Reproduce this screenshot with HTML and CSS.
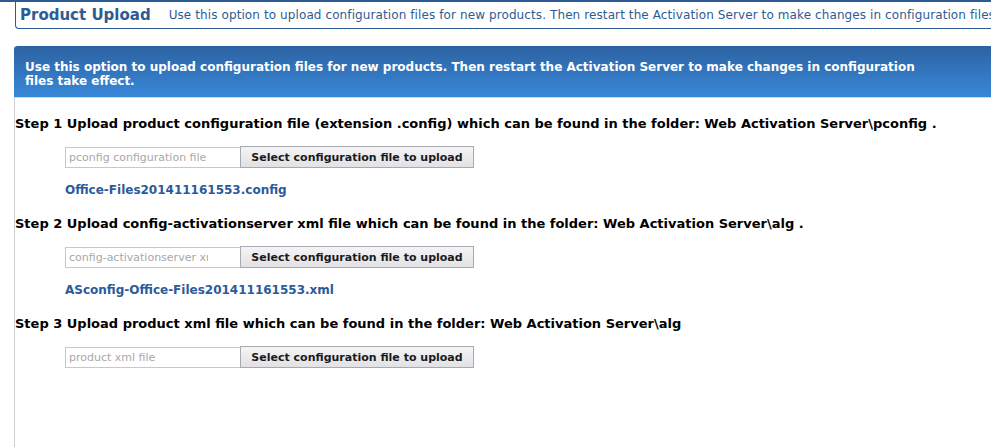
FILE: index.html
```html
<!DOCTYPE html>
<html>
<head>
<meta charset="utf-8">
<link rel="stylesheet" href="styles.css">
</head>
<body>
<div class="topbar"></div>
<div class="page">
  <div class="header">
    <span class="title">Product Upload</span>
    <span class="desc">Use this option to upload configuration files for new products. Then restart the Activation Server to make changes in configuration files take effect.</span>
  </div>
  <div class="content">
    <div class="banner">Use this option to upload configuration files for new products. Then restart the Activation Server to make changes in configuration files take effect.</div>
    <div class="step">
      <div class="step-title">Step 1 Upload product configuration file (extension .config) which can be found in the folder: Web Activation Server\pconfig .</div>
      <div class="upload">
        <input class="file-input" type="text" placeholder="pconfig configuration file">
        <button class="file-btn">Select configuration file to upload</button>
      </div>
      <a class="file-link" href="#">Office-Files201411161553.config</a>
    </div>
    <div class="step">
      <div class="step-title">Step 2 Upload config-activationserver xml file which can be found in the folder: Web Activation Server\alg .</div>
      <div class="upload">
        <input class="file-input" type="text" placeholder="config-activationserver xml file">
        <button class="file-btn">Select configuration file to upload</button>
      </div>
      <a class="file-link" href="#">ASconfig-Office-Files201411161553.xml</a>
    </div>
    <div class="step">
      <div class="step-title">Step 3 Upload product xml file which can be found in the folder: Web Activation Server\alg</div>
      <div class="upload">
        <input class="file-input" type="text" placeholder="product xml file">
        <button class="file-btn">Select configuration file to upload</button>
      </div>
    </div>
  </div>
</div>
</body>
</html>
```

FILE: styles.css
```css
html, body {
  margin: 0;
  padding: 0;
  background: #ffffff;
  overflow: hidden;
}
body {
  font-family: "DejaVu Sans", Verdana, sans-serif;
  width: 991px;
  height: 447px;
}
.topbar {
  height: 2px;
  background: #2d5c94;
}
.page {
  padding-left: 14px;
  width: 977px;
  overflow: hidden;
}
.header {
  margin-left: 1px;
  height: 26px;
  border-left: 1px solid #2d5c94;
  border-bottom: 1px solid #2d5c94;
  border-bottom-left-radius: 4px;
  display: flex;
  align-items: center;
  white-space: nowrap;
  overflow: hidden;
  color: #2d5c94;
  padding-left: 4px;
}
.title {
  font-weight: bold;
  font-size: 15px;
  margin-right: 18px;
  flex-shrink: 0;
}
.desc {
  font-size: 12px;
  letter-spacing: 0.1px;
}
.content {
  margin-top: 17px;
  border-left: 1px solid #cfcfcf;
  height: 420px;
}
.banner {
  width: 977px;
  box-sizing: border-box;
  height: 52px;
  margin-left: -1px;
  border-top-left-radius: 4px;
  background: linear-gradient(#2d62a2, #3888d9);
  border-bottom: 1px solid #d6d6d6;
  color: #ffffff;
  font-weight: bold;
  font-size: 12px;
  line-height: 14px;
  padding: 14px 60px 0 11px;
}
.step {
  padding-top: 18px;
  height: 82px;
}
.step-title {
  font-weight: bold;
  font-size: 13px;
  color: #000;
  white-space: nowrap;
}
.upload {
  display: flex;
  margin: 16px 0 0 50px;
}
.file-input {
  width: 175px;
  height: 21px;
  box-sizing: border-box;
  border: 1px solid #c8c8cc;
  border-right: none;
  padding: 0 32px 0 3px;
  font-family: "DejaVu Sans", Verdana, sans-serif;
  font-size: 11px;
  color: #333;
  outline: none;
}
.file-input::placeholder {
  color: #a8a8a8;
}
.file-btn {
  width: 234px;
  height: 22px;
  margin-top: -1px;
  box-sizing: border-box;
  border: 1px solid #a9a9b0;
  background: linear-gradient(#f4f4f6, #e2e2e6);
  font-family: "DejaVu Sans", Verdana, sans-serif;
  font-weight: bold;
  font-size: 11px;
  color: #1a1a1a;
  padding: 0;
}
.file-link {
  display: block;
  margin: 15px 0 0 50px;
  font-weight: bold;
  font-size: 12px;
  color: #2a5b9a;
  text-decoration: none;
}
```
